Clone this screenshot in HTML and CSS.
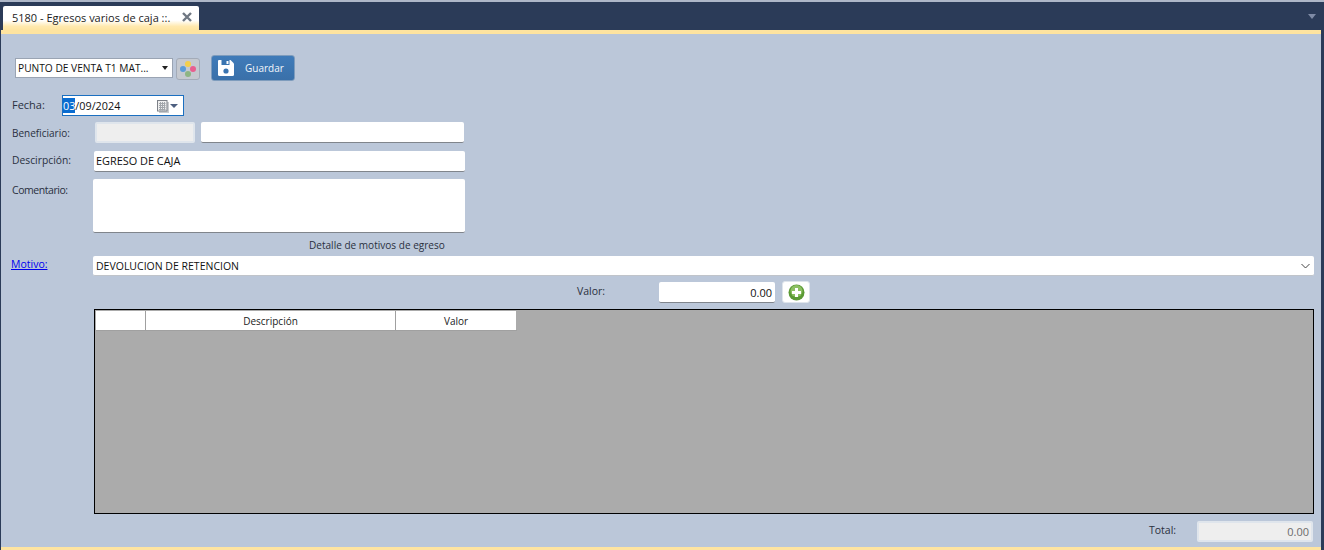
FILE: index.html
```html
<!DOCTYPE html>
<html lang="es">
<head>
<meta charset="utf-8">
<title>5180 - Egresos varios de caja</title>
<link rel="stylesheet" href="styles.css">
</head>
<body>
<div class="window">
  <div class="tabstrip">
    <div class="tab">
      <span class="tab-title">5180 - Egresos varios de caja ::.</span>
      <svg class="tab-close" width="10" height="10" viewBox="0 0 10 10"><path d="M1 1 9 9M9 1 1 9" stroke="#6f7782" stroke-width="2.4"/></svg>
    </div>
    <span class="tab-menu"></span>
  </div>
  <main class="panel">
    <div class="toolbar">
      <div class="select"><span>PUNTO DE VENTA T1 MAT...</span><i class="caret"></i></div>
      <button class="color-btn" type="button">
        <svg width="18" height="18" viewBox="0 0 18 18">
          <circle cx="9" cy="4" r="3" fill="#f3cf4c"/>
          <circle cx="4" cy="9" r="3" fill="#5b9bd8"/>
          <circle cx="14" cy="9" r="3" fill="#e85f8e"/>
          <circle cx="9" cy="14" r="3" fill="#8db583"/>
        </svg>
      </button>
      <button class="save-btn" type="button">
        <svg width="16" height="16" viewBox="0 0 16 16">
          <path d="M1 0H12.5L16 3.5V14.5Q16 16 14.5 16H1.5Q0 16 0 14.5V1Q0 0 1 0Z" fill="#fff"/>
          <rect x="3.5" y="0" width="8" height="5" fill="#3a74b0"/>
          <rect x="8.5" y="1" width="2" height="3" fill="#fff"/>
          <circle cx="8" cy="11" r="2.6" fill="#3a74b0"/>
        </svg>
        <span>Guardar</span>
      </button>
    </div>

    <div class="row row-fecha">
      <label class="lbl lbl-fecha">Fecha:</label>
      <div class="date"><span><b class="sel">03</b>/09/2024</span>
        <svg class="cal" width="13" height="14" viewBox="0 0 13 14">
          <rect x="3" y="3" width="10" height="11" fill="#c9cbce"/>
          <rect x="1.5" y="1.5" width="9.5" height="10.5" fill="#efefef" stroke="#7d8188"/>
          <path d="M3 4.5H9.5M3 6.5H9.5M3 8.5H9.5M3 10.5H9.5M4.5 3V11.5M6.5 3V11.5M8.5 3V11.5" stroke="#a2a6ab" stroke-width="1"/>
        </svg>
        <i class="caret caret-date"></i>
      </div>
    </div>

    <div class="row row-benef">
      <label class="lbl lbl-benef">Beneficiario:</label>
      <div class="field disabled f-code"></div>
      <div class="field f-name"></div>
    </div>

    <div class="row row-desc">
      <label class="lbl lbl-desc">Descirpción:</label>
      <div class="field f-desc"><span class="desc-text">EGRESO DE CAJA</span></div>
    </div>

    <div class="row row-com">
      <label class="lbl lbl-com">Comentario:</label>
      <div class="field f-com"></div>
    </div>

    <div class="detalle">Detalle de motivos de egreso</div>

    <div class="row row-motivo">
      <a class="lbl lbl-motivo" href="#">Motivo:</a>
      <div class="field f-motivo"><span>DEVOLUCION DE RETENCION</span>
        <svg width="9" height="6" viewBox="0 0 9 6"><path d="M.5 1 4.5 5 8.5 1" fill="none" stroke="#444" stroke-width="1"/></svg>
      </div>
    </div>

    <div class="row row-valor">
      <label class="lbl lbl-valor">Valor:</label>
      <div class="field f-valor">0.00</div>
      <button class="add-btn" type="button">
        <svg width="17" height="17" viewBox="0 0 17 17">
          <circle cx="8.5" cy="8.5" r="8" fill="#5b9a35"/>
          <circle cx="8.5" cy="7" r="6" fill="#8cc063"/>
          <path d="M8.5 4V13M4 8.5H13" stroke="#fff" stroke-width="3"/>
        </svg>
      </button>
    </div>

    <div class="grid">
      <div class="grid-head">
        <div class="col col-0"></div>
        <div class="col col-1">Descripción</div>
        <div class="col col-2">Valor</div>
      </div>
    </div>

    <div class="row row-total">
      <label class="lbl lbl-total">Total:</label>
      <div class="field disabled f-total">0.00</div>
    </div>
  </main>
  <div class="bottom-stripe"></div>
</div>
</body>
</html>
```
FILE: styles.css
```css
* { box-sizing: border-box; }
html, body { margin: 0; height: 100%; }
body {
  width: 1324px;
  height: 550px;
  overflow: hidden;
  font-family: "Open Sans", "Noto Sans", sans-serif;
  font-size: 10.5px;
  color: #111;
  background: #2b3b58;
}
.window {
  height: 550px;
  display: flex;
  flex-direction: column;
  border-top: 2px solid #aeb7c8;
}
.tabstrip {
  height: 28px;
  flex: none;
  display: flex;
  align-items: flex-end;
  justify-content: space-between;
  padding: 0 8px 0 3px;
}
.tab {
  width: 196px;
  height: 24px;
  display: flex;
  align-items: center;
  justify-content: space-between;
  padding: 0 7px 2px 9px;
  border-radius: 2px 2px 0 0;
  background: linear-gradient(#fff 0, #fff 60%, #ffe9ae 85%, #fee4a0 100%);
}
.tab-title { color: #222; white-space: nowrap; font-size: 11px; }
.tab-menu {
  width: 0;
  height: 0;
  align-self: flex-start;
  margin-top: 12px;
  border-left: 4px solid transparent;
  border-right: 4px solid transparent;
  border-top: 5px solid #7f8ba6;
}
.panel {
  flex: none;
  width: 1320px;
  height: 517px;
  margin-left: 1px;
  background: #bbc7d9;
  border-top: 4px solid #fee4a0;
  display: flex;
  flex-direction: column;
}
.bottom-stripe {
  flex: none;
  width: 1320px;
  height: 3px;
  margin-left: 1px;
  background: #fee4a0;
}

/* toolbar */
.toolbar {
  height: 26px;
  margin-top: 21px;
  padding-left: 14px;
  display: flex;
  align-items: flex-start;
  flex: none;
}
.select {
  width: 158px;
  height: 20px;
  margin-top: 3px;
  padding: 0 4px 0 2px;
  display: flex;
  align-items: center;
  justify-content: space-between;
  background: #fff;
  border: 1px solid #9aa4b3;
  white-space: nowrap;
  font-size: 10.2px;
}
.caret {
  display: block;
  width: 0;
  height: 0;
  border-left: 3.5px solid transparent;
  border-right: 3.5px solid transparent;
  border-top: 4px solid #222;
}
.color-btn {
  width: 24px;
  height: 22px;
  margin: 3px 0 0 3px;
  padding: 0;
  display: flex;
  align-items: center;
  justify-content: center;
  background: #c5c9d0;
  border: 1px solid #a3abb8;
  border-radius: 3px;
}
.save-btn {
  width: 84px;
  height: 26px;
  margin-left: 11px;
  padding: 0 0 0 6px;
  display: flex;
  align-items: center;
  gap: 11px;
  font: inherit;
  font-size: 10px;
  color: #f2f6fb;
  background: linear-gradient(#3f7bb9, #3a70a9);
  border: 1px solid #7e9cbd;
  border-radius: 3px;
}

/* rows */
.row { display: flex; flex: none; position: relative; align-items: flex-start; }
.lbl { color: #2a3040; white-space: nowrap; line-height: 14px; }
.field {
  height: 21px;
  padding: 0 3px;
  display: flex;
  align-items: center;
  background: #fff;
  border-radius: 2px;
  border-bottom: 1px solid #80858c;
  white-space: nowrap;
}
.disabled {
  background: #eeeeee;
  border: 2px solid #dfe5ec;
  color: #6b6b6b;
}

.row-fecha { height: 21px; margin-top: 14px; padding-left: 11px; }
.lbl-fecha { width: 50px; margin-top: 3px; font-size: 11px; }
.date {
  width: 122px;
  height: 21px;
  padding: 0 5px 0 0;
  display: flex;
  align-items: center;
  background: #fff;
  border: 1px solid #1b6fc0;
  font-size: 10.8px;
}
.date span { flex: 1; }
.sel { font-weight: 400; background: #0a6cd0; color: #fff; }
.cal { margin-right: 1px; }
.caret-date { border-top-color: #4d5f80; border-left-width: 4px; border-right-width: 4px; }

.row-benef { height: 21px; margin-top: 6px; padding-left: 11px; }
.lbl-benef { width: 83px; margin-top: 4px; font-size: 10px; }
.f-code { width: 100px; }
.f-name { width: 263px; margin-left: 6px; }

.row-desc { height: 21px; margin-top: 8px; padding-left: 11px; }
.lbl-desc { width: 82px; margin-top: 2px; font-size: 10.3px; }
.f-desc { width: 371px; padding-left: 2px; font-size: 10.9px; }
.desc-text { margin-top: -2px; }

.row-com { height: 54px; margin-top: 7px; padding-left: 11px; }
.lbl-com { width: 81px; margin-top: 4px; font-size: 10.5px; letter-spacing: -.45px; }
.f-com { width: 372px; height: 54px; }

.detalle { flex: none; height: 23px; padding: 5px 0 0 308px; color: #2a3040; line-height: 14px; font-size: 10.05px; }

.row-motivo { height: 20px; padding-left: 10px; }
.lbl-motivo { width: 82px; margin-top: 1px; color: #0000ee; text-decoration: underline; }
.f-motivo {
  width: 1221px;
  height: 20px;
  justify-content: space-between;
  padding: 0 4px 0 3px;
  border-bottom-color: #c0c4ca;
}

.row-valor { height: 22px; margin-top: 5px; padding-left: 576px; }
.lbl-valor { width: 82px; margin-top: 3px; }
.f-valor { width: 116px; justify-content: flex-end; margin-top: 1px; font-size: 11px; padding-right: 3px; }
.add-btn {
  width: 28px;
  height: 22px;
  margin-left: 7px;
  padding: 0;
  display: flex;
  align-items: center;
  justify-content: center;
  background: #fff;
  border: 1px solid #dfe5ec;
  border-radius: 3px;
}

.grid {
  flex: none;
  width: 1220px;
  height: 205px;
  margin: 6px 0 0 93px;
  background: #ababab;
  border: 1px solid #000;
  padding: 1px;
}
.grid-head { display: flex; height: 20px; border-bottom: 1px solid #a0a0a0; width: 421px; }
.col {
  height: 19px;
  background: #fff;
  display: flex;
  align-items: center;
  justify-content: center;
  color: #222;
  font-size: 10px;
}
.col-0 { width: 50px; border-right: 1px solid #a0a0a0; }
.col-1 { width: 250px; border-right: 1px solid #a0a0a0; }
.col-2 { width: 120px; }

.row-total { height: 21px; margin-top: 7px; padding-left: 1148px; }
.lbl-total { width: 48px; margin-top: 2px; }
.f-total { width: 116px; justify-content: flex-end; padding-right: 2px; font-size: 11px; }
```
